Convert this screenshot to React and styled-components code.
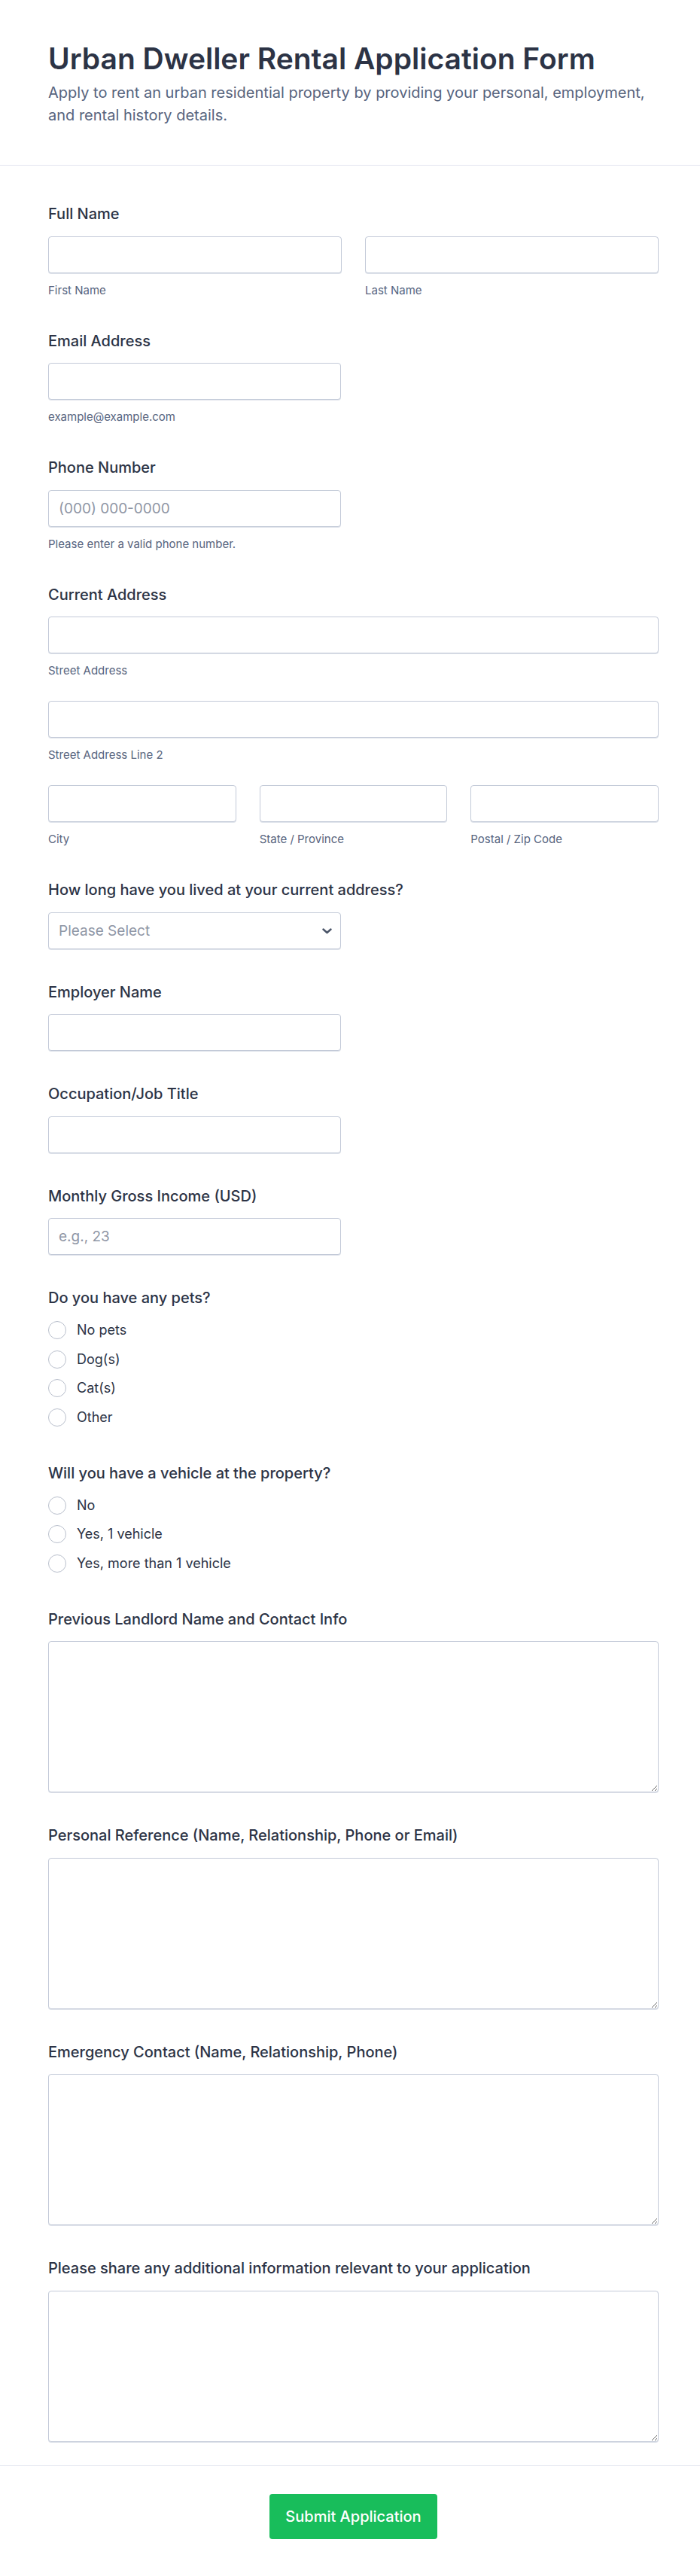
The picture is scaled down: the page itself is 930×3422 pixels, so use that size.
import React from 'react';
import styled, { createGlobalStyle } from 'styled-components';

const GlobalStyle = createGlobalStyle`
  body {
    margin: 0;
    background: #fff;
    font-family: Inter, 'Noto Sans', sans-serif;
    color: #2c3345;
  }
  * {
    box-sizing: border-box;
  }
`;

const Form = styled.form`
  width: 930px;
  background: #fff;
`;

const Header = styled.header`
  padding: 54px 55px 51px 64px;
  border-bottom: 1px solid #e3e5ef;
`;

const Title = styled.h1`
  margin: 0;
  font-size: 39px;
  line-height: 47px;
  font-weight: 600;
  color: #2c3345;
`;

const Subtitle = styled.p`
  margin: 7px 0 0;
  font-size: 20px;
  line-height: 30px;
  color: #57647e;
`;

const Body = styled.div`
  display: flex;
  flex-direction: column;
  gap: 45px;
  padding: 52px 55px 31px 64px;
`;

const Field = styled.div`
  display: flex;
  flex-direction: column;
  padding-bottom: ${(p) => (p.$extra ? '5px' : '0')};
`;

const Label = styled.label`
  font-size: 20px;
  line-height: 24px;
  font-weight: 500;
  color: #2c3345;
  margin-bottom: ${(p) => p.$gap || 17.5}px;
`;

const Row = styled.div`
  display: grid;
  grid-template-columns: repeat(${(p) => p.$cols}, 1fr);
  column-gap: 31px;
`;

const Stack = styled.div`
  display: flex;
  flex-direction: column;
  gap: 30px;
`;

const Cell = styled.div`
  display: flex;
  flex-direction: column;
  width: ${(p) => (p.$half ? '389px' : 'auto')};
`;

const Input = styled.input`
  width: 100%;
  height: 49px;
  padding: 0 13px;
  border: 1px solid #c3cad8;
  border-radius: 4px;
  box-shadow: 0 1px 0 rgba(195, 202, 216, 0.55);
  font-family: inherit;
  font-size: 19px;
  color: #2c3345;
  background: #fff;
  outline: none;

  &::placeholder {
    color: #8f96a5;
  }
`;

const SubLabel = styled.span`
  margin-top: 13px;
  font-size: 15px;
  line-height: 20px;
  color: #57647e;
`;

const SelectWrap = styled.div`
  position: relative;
  width: 389px;
`;

const Select = styled.select`
  width: 100%;
  height: 49px;
  padding: 0 36px 0 13px;
  border: 1px solid #c3cad8;
  border-radius: 4px;
  box-shadow: 0 1px 0 rgba(195, 202, 216, 0.55);
  appearance: none;
  background: #fff;
  font-family: inherit;
  font-size: 19px;
  color: #8f96a5;
  outline: none;
`;

const Chevron = styled.svg`
  position: absolute;
  right: 12px;
  top: 21px;
  pointer-events: none;
`;

const Options = styled.div`
  display: flex;
  flex-direction: column;
  gap: 14.5px;
`;

const Option = styled.label`
  display: flex;
  align-items: center;
  gap: 14px;
  font-size: 18px;
  line-height: 24px;
  color: #2c3345;
`;

const Radio = styled.input`
  appearance: none;
  margin: 0;
  width: 24px;
  height: 24px;
  border: 1px solid #b9bfcc;
  border-radius: 50%;
  background: #fff;
  flex-shrink: 0;
`;

const TextArea = styled.textarea`
  width: 100%;
  height: 201px;
  padding: 12px 13px;
  border: 1px solid #c3cad8;
  border-radius: 4px;
  box-shadow: 0 1px 0 rgba(195, 202, 216, 0.55);
  font-family: inherit;
  font-size: 18px;
  color: #2c3345;
  outline: none;
  display: block;
`;

const Footer = styled.footer`
  display: flex;
  justify-content: center;
  padding: 37px 55px 49px 64px;
  border-top: 1px solid #e3e5ef;
`;

const SubmitButton = styled.button`
  height: 60px;
  padding: 0 21px;
  border: none;
  border-radius: 4px;
  background: #18bd5b;
  color: #fff;
  font-family: inherit;
  font-size: 20px;
  font-weight: 500;
  cursor: pointer;
`;

const petOptions = ['No pets', 'Dog(s)', 'Cat(s)', 'Other'];
const vehicleOptions = ['No', 'Yes, 1 vehicle', 'Yes, more than 1 vehicle'];
const textAreas = [
  'Previous Landlord Name and Contact Info',
  'Personal Reference (Name, Relationship, Phone or Email)',
  'Emergency Contact (Name, Relationship, Phone)',
  'Please share any additional information relevant to your application',
];

const SimpleField = ({ label, placeholder, sub, half = true }) => (
  <Field>
    <Label>{label}</Label>
    <Cell $half={half}>
      <Input type="text" placeholder={placeholder} />
      {sub && <SubLabel>{sub}</SubLabel>}
    </Cell>
  </Field>
);

const RadioField = ({ label, name, options }) => (
  <Field $extra>
    <Label $gap={19}>{label}</Label>
    <Options>
      {options.map((o) => (
        <Option key={o}>
          <Radio type="radio" name={name} />
          {o}
        </Option>
      ))}
    </Options>
  </Field>
);

const App = () => {
  return (
    <>
      <GlobalStyle />
      <Form onSubmit={(e) => e.preventDefault()}>
        <Header>
          <Title>Urban Dweller Rental Application Form</Title>
          <Subtitle>
            Apply to rent an urban residential property by providing your
            personal, employment, and rental history details.
          </Subtitle>
        </Header>

        <Body>
          <Field>
            <Label>Full Name</Label>
            <Row $cols={2}>
              <Cell>
                <Input type="text" />
                <SubLabel>First Name</SubLabel>
              </Cell>
              <Cell>
                <Input type="text" />
                <SubLabel>Last Name</SubLabel>
              </Cell>
            </Row>
          </Field>

          <SimpleField label="Email Address" sub="example@example.com" />
          <SimpleField
            label="Phone Number"
            placeholder="(000) 000-0000"
            sub="Please enter a valid phone number."
          />

          <Field>
            <Label>Current Address</Label>
            <Stack>
              <Cell>
                <Input type="text" />
                <SubLabel>Street Address</SubLabel>
              </Cell>
              <Cell>
                <Input type="text" />
                <SubLabel>Street Address Line 2</SubLabel>
              </Cell>
              <Row $cols={3}>
                <Cell>
                  <Input type="text" />
                  <SubLabel>City</SubLabel>
                </Cell>
                <Cell>
                  <Input type="text" />
                  <SubLabel>State / Province</SubLabel>
                </Cell>
                <Cell>
                  <Input type="text" />
                  <SubLabel>Postal / Zip Code</SubLabel>
                </Cell>
              </Row>
            </Stack>
          </Field>

          <Field>
            <Label>How long have you lived at your current address?</Label>
            <SelectWrap>
              <Select defaultValue="">
                <option value="">Please Select</option>
                <option>Less than 6 months</option>
                <option>6 months - 1 year</option>
                <option>1 - 3 years</option>
                <option>More than 3 years</option>
              </Select>
              <Chevron width="13" height="8" viewBox="0 0 13 8" fill="none">
                <polyline
                  points="1.5,1.5 6.5,6 11.5,1.5"
                  stroke="#4a5468"
                  strokeWidth="2.4"
                  strokeLinecap="round"
                  strokeLinejoin="round"
                />
              </Chevron>
            </SelectWrap>
          </Field>

          <SimpleField label="Employer Name" />
          <SimpleField label="Occupation/Job Title" />
          <SimpleField label="Monthly Gross Income (USD)" placeholder="e.g., 23" />

          <RadioField label="Do you have any pets?" name="pets" options={petOptions} />
          <RadioField
            label="Will you have a vehicle at the property?"
            name="vehicle"
            options={vehicleOptions}
          />

          {textAreas.map((t) => (
            <Field key={t}>
              <Label>{t}</Label>
              <TextArea />
            </Field>
          ))}
        </Body>

        <Footer>
          <SubmitButton type="submit">Submit Application</SubmitButton>
        </Footer>
      </Form>
    </>
  );
};

export default App;
